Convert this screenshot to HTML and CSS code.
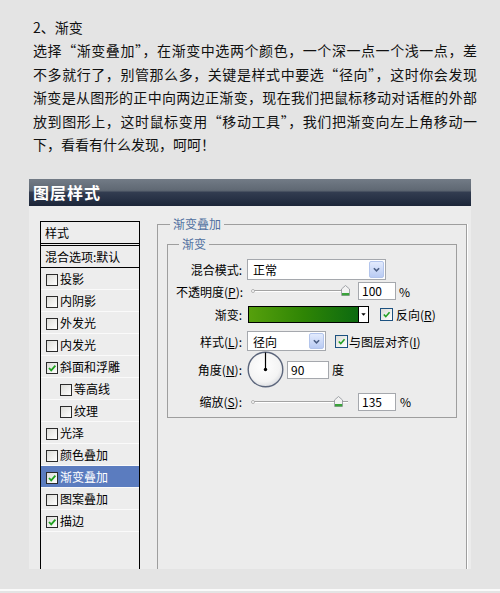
FILE: index.html
```html
<!DOCTYPE html>
<html lang="zh-CN">
<head>
<meta charset="utf-8">
<title>渐变</title>
<link rel="stylesheet" href="styles.css">
</head>
<body>
<div class="page">
  <div class="article">
    <div class="ln heading">2、渐变</div>
    <div class="ln just">选择“渐变叠加”，在渐变中选两个颜色，一个深一点一个浅一点，差</div>
    <div class="ln just">不多就行了，别管那么多，关键是样式中要选“径向”，这时你会发现</div>
    <div class="ln just">渐变是从图形的正中向两边正渐变，现在我们把鼠标移动对话框的外部</div>
    <div class="ln just">放到图形上，这时鼠标变用“移动工具”，我们把渐变向左上角移动一</div>
    <div class="ln">下，看看有什么发现，呵呵！</div>
  </div>

  <div class="dialog">
    <div class="titlebar">图层样式</div>
    <div class="dlg-body">
      <div class="list">
        <div class="list-head">样式</div>
        <div class="list-blend">混合选项:默认</div>
        <div class="item"><span class="cb"></span>投影</div>
        <div class="item"><span class="cb"></span>内阴影</div>
        <div class="item"><span class="cb"></span>外发光</div>
        <div class="item"><span class="cb"></span>内发光</div>
        <div class="item"><span class="cb"><svg viewBox="0 0 10 10"><path d="M2 5 L4.2 7.4 L8.4 2.6"/></svg></span>斜面和浮雕</div>
        <div class="item sub"><span class="cb"></span>等高线</div>
        <div class="item sub"><span class="cb"></span>纹理</div>
        <div class="item"><span class="cb"></span>光泽</div>
        <div class="item"><span class="cb"></span>颜色叠加</div>
        <div class="item selected"><span class="cb"><svg viewBox="0 0 10 10"><path d="M2 5 L4.2 7.4 L8.4 2.6"/></svg></span>渐变叠加</div>
        <div class="item"><span class="cb"></span>图案叠加</div>
        <div class="item"><span class="cb"><svg viewBox="0 0 10 10"><path d="M2 5 L4.2 7.4 L8.4 2.6"/></svg></span>描边</div>
      </div>

      <fieldset class="outer">
        <legend>渐变叠加</legend>
        <fieldset class="inner">
          <legend>渐变</legend>

          <div class="row r1">
            <span class="lbl">混合模式:</span>
            <div class="select sel-mode"><span class="sel-text">正常</span><span class="dd"><svg viewBox="0 0 10 8"><path d="M2 2.5 L5 5.5 L8 2.5"/></svg></span></div>
          </div>

          <div class="row r2">
            <span class="lbl">不透明度(<u>P</u>):</span>
            <svg class="slider" viewBox="0 0 106 18" width="106" height="18">
              <line x1="6" y1="8.5" x2="101" y2="8.5" stroke="#a3a3a3" stroke-width="1"/>
              <line x1="6" y1="9.5" x2="101" y2="9.5" stroke="#ffffff" stroke-width="1"/>
              <circle cx="6" cy="9" r="1.5" fill="#ffffff" stroke="#a3a3a3" stroke-width="0.8"/>
              <path d="M98.5 13.5 V7 L102.5 3.5 L106.5 7 V13.5 Z" fill="#f2f2f2" stroke="#8d9097" stroke-width="0.8" transform="translate(-4 0)"/>
              <rect x="95" y="11" width="7.2" height="2.4" fill="#3aa23a"/>
            </svg>
            <span class="num">100</span>
            <span class="unit">%</span>
          </div>

          <div class="row r3">
            <span class="lbl">渐变:</span>
            <span class="grad"></span><span class="grad-arrow"><svg viewBox="0 0 8 8"><path d="M1.5 2.5 H6.5 L4 5.5 Z"/></svg></span>
            <span class="cb2"><svg viewBox="0 0 10 10"><path d="M2 5 L4.2 7.4 L8.4 2.6"/></svg></span>
            <span class="cblbl">反向(<u>R</u>)</span>
          </div>

          <div class="row r4">
            <span class="lbl">样式(<u>L</u>):</span>
            <div class="select sel-style"><span class="sel-text">径向</span><span class="dd"><svg viewBox="0 0 10 8"><path d="M2 2.5 L5 5.5 L8 2.5"/></svg></span></div>
            <span class="cb2 cb-align"><svg viewBox="0 0 10 10"><path d="M2 5 L4.2 7.4 L8.4 2.6"/></svg></span>
            <span class="cblbl cblbl-align">与图层对齐(<u>I</u>)</span>
          </div>

          <div class="row r5">
            <span class="lbl">角度(<u>N</u>):</span>
            <svg class="dial" viewBox="0 0 37 37" width="37" height="37">
              <defs>
                <radialGradient id="dialfill" cx="0.45" cy="0.4" r="0.65">
                  <stop offset="0" stop-color="#ffffff"/>
                  <stop offset="0.7" stop-color="#f4f4f4"/>
                  <stop offset="1" stop-color="#d6d8dc"/>
                </radialGradient>
              </defs>
              <circle cx="18.5" cy="18.5" r="17.3" fill="url(#dialfill)" stroke="#5c667c" stroke-width="1.4"/>
              <line x1="18.5" y1="1.5" x2="18.5" y2="18.5" stroke="#000" stroke-width="1.2"/>
              <circle cx="18.5" cy="18.5" r="1.7" fill="#000"/>
            </svg>
            <span class="num num-angle">90</span>
            <span class="unit unit-deg">度</span>
          </div>

          <div class="row r6">
            <span class="lbl">缩放(<u>S</u>):</span>
            <svg class="slider" viewBox="0 0 106 18" width="106" height="18">
              <line x1="6" y1="8.5" x2="101" y2="8.5" stroke="#a3a3a3" stroke-width="1"/>
              <line x1="6" y1="9.5" x2="101" y2="9.5" stroke="#ffffff" stroke-width="1"/>
              <circle cx="6" cy="9" r="1.5" fill="#ffffff" stroke="#a3a3a3" stroke-width="0.8"/>
              <path d="M87.5 13.5 V7 L91.5 3.5 L95.5 7 V13.5 Z" fill="#f2f2f2" stroke="#8d9097" stroke-width="0.8"/>
              <rect x="88" y="11" width="7.2" height="2.4" fill="#3aa23a"/>
            </svg>
            <span class="num">135</span>
            <span class="unit unit-scale">%</span>
          </div>
        </fieldset>
      </fieldset>
    </div>
  </div>
  <div class="foot"></div>
</div>
</body>
</html>
```

FILE: styles.css
```css
html, body {
  margin: 0;
  padding: 0;
}
body {
  background: #e4e4e4;
  font-family: "Noto Sans CJK SC", "Noto Sans", sans-serif;
  color: #111;
}
.page {
  width: 500px;
  height: 593px;
  overflow: hidden;
}
.article {
  padding: 16px 0 0 33px;
  width: 444px;
  font-size: 14px;
}
.ln {
  height: 23.4px;
  line-height: 23.4px;
  white-space: nowrap;
}
.just {
  text-align: justify;
  text-align-last: justify;
  text-justify: inter-character;
}

/* dialog */
.dialog {
  margin: 23px 0 0 29px;
  width: 442px;
  background: #ececec;
  font-size: 12px;
  color: #000;
}
.titlebar {
  height: 27px;
  line-height: 27px;
  padding-left: 4px;
  color: #fff;
  font-weight: bold;
  font-size: 16px;
  letter-spacing: 1px;
  background: linear-gradient(to bottom, #727b86 0%, #5f6873 42%, #323c50 50%, #273145 75%, #1c2538 100%);
}
.dlg-body {
  height: 363px;
  padding: 11px 4px 0 11px;
  box-sizing: border-box;
  display: flex;
  align-items: stretch;
  overflow: hidden;
}

/* left list */
.list {
  width: 98px;
  margin-top: 4px;
  border: 1px solid #000;
  border-bottom: none;
  background: #ededed;
  flex: none;
}
.list-head {
  height: 21px;
  line-height: 21px;
  padding-left: 4px;
  border-bottom: 3px double #000;
}
.list-blend {
  height: 21px;
  line-height: 21px;
  padding-left: 4px;
  border-bottom: 1px solid #000;
}
.item {
  height: 21px;
  line-height: 21px;
  border-bottom: 1px solid #fafafa;
  display: flex;
  align-items: center;
  padding-left: 5px;
  white-space: nowrap;
}
.item.sub {
  padding-left: 19px;
}
.item.selected {
  background: #5b7cbf;
  color: #fff;
}
.cb {
  width: 10px;
  height: 10px;
  border: 1px solid #2b2b2b;
  background: linear-gradient(135deg, #dcdcd8, #ffffff);
  margin-right: 2px;
  margin-top: 2px;
  flex: none;
  display: flex;
}
.cb svg, .cb2 svg {
  width: 100%;
  height: 100%;
  fill: none;
  stroke: #21a121;
  stroke-width: 1.8;
}

/* fieldsets */
fieldset {
  margin: 0;
  min-inline-size: 0;
}
legend {
  padding: 0 3px;
  margin-left: 3px;
  line-height: 14px;
  font-size: 12px;
  color: #50709f;
}
.outer {
  flex: 1;
  margin-left: 17px;
  border: 1px solid #9e9e9e;
  border-bottom: none;
  padding: 6px 9px 0 9px;
  box-shadow: 1px 0 0 #fff;
}
.inner {
  border: 1px solid #9e9e9e;
  padding: 8px 6px 6px 8px;
}

.row {
  display: flex;
  align-items: center;
  white-space: nowrap;
}
.lbl {
  width: 66px;
  text-align: right;
  flex: none;
}
.r1 { height: 21px; }
.r2 { height: 18px; margin-top: 2px; }
.r3 { height: 17px; margin-top: 6px; }
.r4 { height: 20px; margin-top: 8px; }
.r5 { height: 37px; }
.r6 { height: 19px; margin-top: 4px; }

.select {
  margin-left: 5px;
  height: 100%;
  box-sizing: border-box;
  border: 1px solid #a5a8ad;
  background: #fff;
  display: flex;
  justify-content: space-between;
  align-items: center;
}
.sel-mode { width: 139px; }
.sel-style { width: 79px; }
.sel-text {
  padding-left: 5px;
}
.dd {
  width: 15px;
  height: calc(100% - 2px);
  margin: 1px;
  box-sizing: border-box;
  border: 1px solid #b3c5ec;
  border-radius: 2px;
  background: linear-gradient(to bottom, #e3ebfd, #b9cbf3);
  display: flex;
  align-items: center;
  justify-content: center;
}
.dd svg {
  width: 9px;
  height: 7px;
  fill: none;
  stroke: #4a5e84;
  stroke-width: 1.8;
}

.slider {
  margin-left: 5px;
  flex: none;
}
.num {
  margin-left: 5px;
  width: 38px;
  height: 18px;
  box-sizing: border-box;
  border: 1px solid #a5a8ad;
  background: #fff;
  padding-left: 3px;
  line-height: 16px;
}
.unit {
  margin-left: 3px;
}
.unit-scale {
  margin-left: 4px;
}

.grad {
  margin-left: 6px;
  width: 111px;
  height: 17px;
  box-sizing: border-box;
  border: 1px solid #000;
  background: linear-gradient(to right, #56a00c, #2f8505 50%, #0c6a10);
}
.grad-arrow {
  width: 10px;
  height: 17px;
  box-sizing: border-box;
  border: 1px solid #000;
  border-left: none;
  background: #fff;
  display: flex;
  align-items: center;
  justify-content: center;
}
.grad-arrow svg {
  width: 7px;
  height: 7px;
  fill: #000;
}
.cb2 {
  margin-left: 11px;
  width: 13px;
  height: 13px;
  box-sizing: border-box;
  border: 1px solid #1c5180;
  background: linear-gradient(135deg, #dcdcd7, #ffffff);
  display: flex;
  padding: 1px;
  flex: none;
}
.cblbl {
  margin-left: 3px;
}
.cb-align {
  margin-left: 9px;
}
.cblbl-align {
  margin-left: 1px;
}

.dial {
  margin-left: 5px;
  flex: none;
}
.num-angle {
  margin-left: 3px;
  width: 42px;
}
.unit-deg {
  margin-left: 3px;
}

.foot {
  margin-top: 20px;
  height: 2px;
  background: #fafafa;
}
```
